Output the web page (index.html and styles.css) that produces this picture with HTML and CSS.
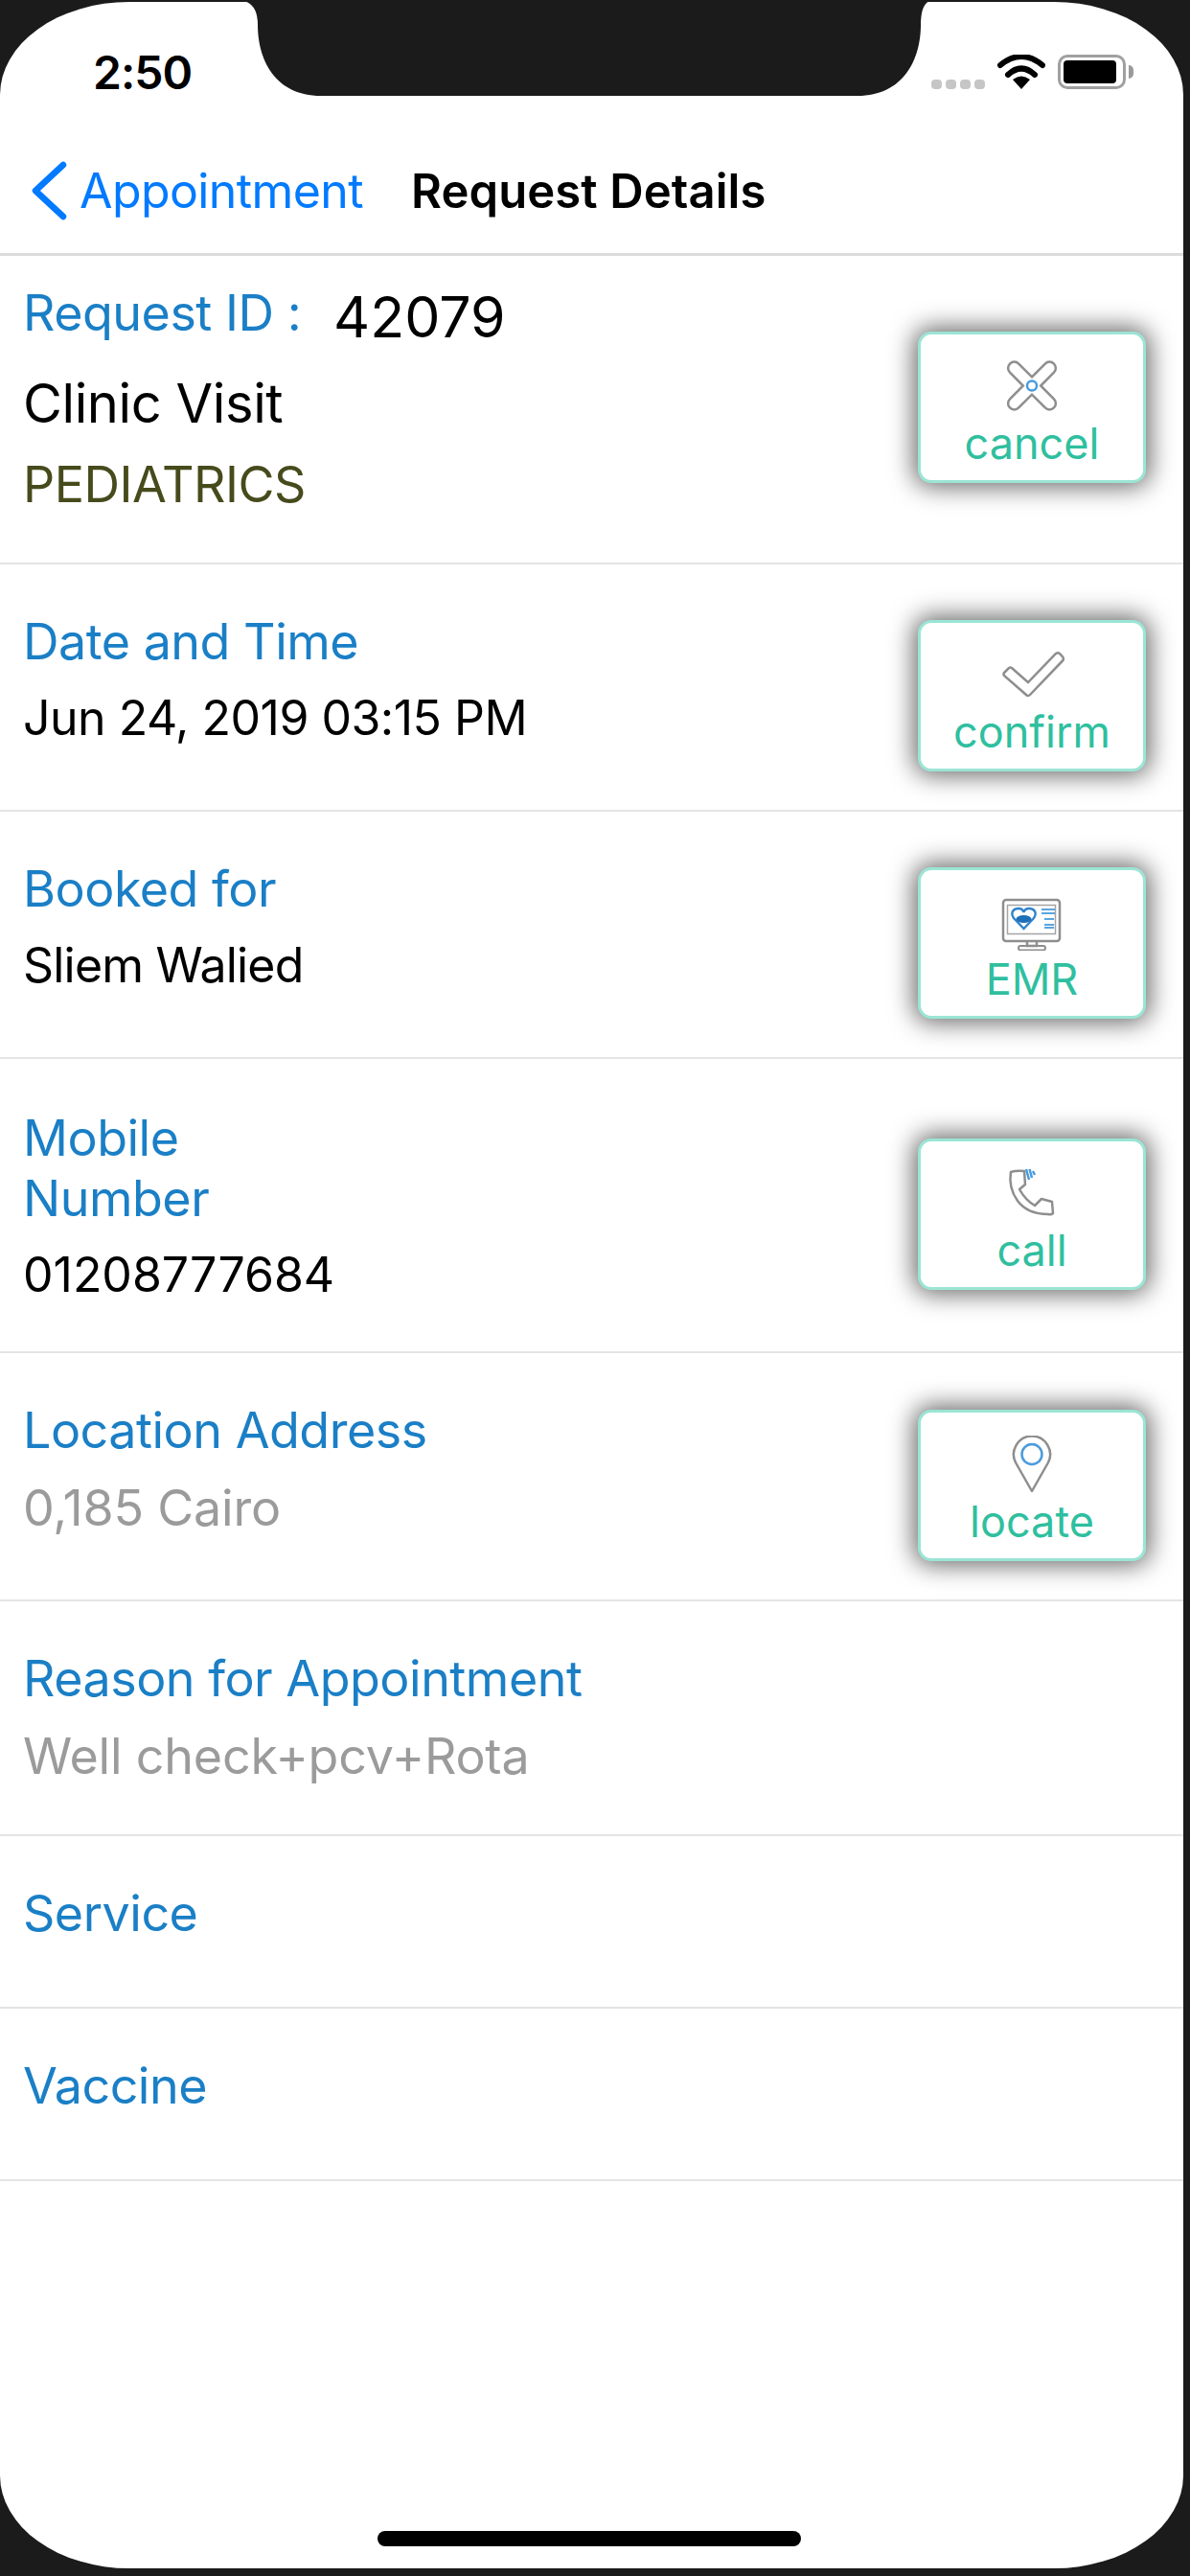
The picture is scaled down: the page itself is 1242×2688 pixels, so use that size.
FILE: index.html
```html
<!DOCTYPE html>
<html lang="en">

<head>
    <meta charset="UTF-8">
    <meta name="viewport" content="width=device-width, initial-scale=1.0">
    <title>Request Details</title>
    <link rel="stylesheet" href="styles.css">
</head>

<body>
    <div class="screen">
        <svg class="notch" width="728" height="100" viewBox="0 0 728 100">
            <path d="M0 0Q22 0 22 26C22 62 40 100 88 100H648C696 100 714 62 714 26Q714 0 728 0Z" fill="#1b1b1b"/>
        </svg>

        <div class="status-bar">
            <span class="time">2:50</span>
            <div class="status-icons">
                <span class="signal"><i></i><i></i><i></i><i></i></span>
                <svg width="50" height="36" viewBox="0 0 50 36">
                    <path d="M25 36L16 26Q25 19 34 26Z" fill="#000"/>
                    <path d="M11 21Q25 8 39 21" fill="none" stroke="#000" stroke-width="6" stroke-linecap="round"/>
                    <path d="M3 11Q25 -7 47 11" fill="none" stroke="#000" stroke-width="6" stroke-linecap="round"/>
                </svg>
                <span class="battery"><i></i></span>
            </div>
        </div>

        <div class="nav-bar">
            <a class="back">
                <svg width="40" height="62" viewBox="0 0 40 62">
                    <path d="M36 4L7 31L36 58" fill="none" stroke="#007aff" stroke-width="6.5" stroke-linecap="round" stroke-linejoin="round"/>
                </svg>
                <span>Appointment</span>
            </a>
            <span class="nav-title">Request Details</span>
        </div>

        <section class="row row-request">
            <div class="info">
                <div class="request-id"><span class="label">Request ID :</span><span class="id-value">42079</span></div>
                <div class="visit-type">Clinic Visit</div>
                <div class="speciality">PEDIATRICS</div>
            </div>
            <a class="action">
                <svg class="action-icon" width="68" height="60" viewBox="0 0 68 60">
                    <path transform="translate(34 29.5) rotate(45)" d="M-6.5 -6.5V-26A6.5 6.5 0 0 1 6.5 -26V-6.5H26A6.5 6.5 0 0 1 26 6.5H6.5V26A6.5 6.5 0 0 1 -6.5 26V6.5H-26A6.5 6.5 0 0 1 -26 -6.5Z" fill="none" stroke="#8e8e8e" stroke-width="2.5"/>
                    <circle cx="34" cy="29.5" r="5" fill="#fff" stroke="#4a9bdc" stroke-width="2.5"/>
                </svg>
                <span>cancel</span>
            </a>
        </section>

        <section class="row row-date">
            <div class="info">
                <div class="label">Date and Time</div>
                <div class="value">Jun 24, 2019 03:15 PM</div>
            </div>
            <a class="action">
                <svg class="action-icon" width="68" height="60" viewBox="0 0 68 60">
                    <path d="M5 28L10 23Q11.5 22 13 23L30 38L59 8Q61 6.5 63 8L66.5 12Q67.5 14 66 15.5L32 51Q30 53 28 51L5 31Q4 29.5 5 28Z" fill="none" stroke="#8e8e8e" stroke-width="2.5"/>
                </svg>
                <span>confirm</span>
            </a>
        </section>

        <section class="row row-booked">
            <div class="info">
                <div class="label">Booked for</div>
                <div class="value">Sliem Walied</div>
            </div>
            <a class="action">
                <svg class="action-icon" width="68" height="60" viewBox="0 0 68 60">
                    <rect x="4" y="7" width="59" height="43" rx="3" fill="none" stroke="#8e8e8e" stroke-width="2.5"/>
                    <rect x="8.5" y="12.5" width="50" height="30" fill="#fff" stroke="#a5a5a5" stroke-width="1.5"/>
                    <path d="M29 51V55H39V51" fill="none" stroke="#8e8e8e" stroke-width="2.5"/>
                    <rect x="20" y="55" width="28" height="4.5" rx="2.2" fill="none" stroke="#8e8e8e" stroke-width="2"/>
                    <path d="M25.5 37L15 26C11 20 15 16 20 16C23 16 25 18 25.5 20C26 18 28 16 31 16C36 16 40 20 36 26Z" fill="#fff" stroke="#2f83cb" stroke-width="2.4"/>
                    <ellipse cx="25.5" cy="27" rx="8" ry="4" fill="#1d6fb8"/>
                    <path d="M44 17H58M44 21H58M47 27H57M47 33H57M47 36H57" stroke="#5aa5e0" stroke-width="2"/>
                </svg>
                <span>EMR</span>
            </a>
        </section>

        <section class="row row-mobile">
            <div class="info">
                <div class="label">Mobile<br>Number</div>
                <div class="value">01208777684</div>
            </div>
            <a class="action">
                <svg class="action-icon" width="68" height="60" viewBox="0 0 68 60">
                    <path d="M12 8Q18 6 26 7L27 21L21 26Q27 37 37 43L44 36L55 39L56 51Q54 53 51 52C36 52 25 46 19 38C14 31 10 20 12 8Z" fill="none" stroke="#8e8e8e" stroke-width="2.5" stroke-linejoin="round"/>
                    <path d="M28 5L31 16M31.500 5L34 14M35 7L37 11" fill="none" stroke="#4a9bdc" stroke-width="2.5"/>
                </svg>
                <span>call</span>
            </a>
        </section>

        <section class="row row-location">
            <div class="info">
                <div class="label">Location Address</div>
                <div class="value muted">0,185 Cairo</div>
            </div>
            <a class="action">
                <svg class="action-icon" width="68" height="60" viewBox="0 0 68 60">
                    <path d="M34 58L17.500 29A19 19 0 1 1 50.500 29Z" fill="none" stroke="#8e8e8e" stroke-width="2.5" stroke-linejoin="round"/>
                    <circle cx="34" cy="19.500" r="10.500" fill="none" stroke="#4a9bdc" stroke-width="2.5"/>
                </svg>
                <span>locate</span>
            </a>
        </section>

        <section class="row row-reason">
            <div class="info">
                <div class="label">Reason for Appointment</div>
                <div class="value muted">Well check+pcv+Rota</div>
            </div>
        </section>

        <section class="row row-single">
            <div class="info">
                <div class="label">Service</div>
            </div>
        </section>

        <section class="row row-single">
            <div class="info">
                <div class="label">Vaccine</div>
            </div>
        </section>

        <div class="home-indicator"></div>
    </div>
</body>

</html>
```

FILE: styles.css
```css
html,
body {
    margin: 0;
    padding: 0;
    background: #1b1b1b;
}

body {
    width: 1242px;
    height: 2688px;
    overflow: hidden;
    font-family: Inter, "Liberation Sans", sans-serif;
}

.screen {
    position: relative;
    width: 1235px;
    height: 2678px;
    margin-top: 2px;
    background: #fff;
    border-radius: 135px / 97px;
    overflow: hidden;
}

.notch {
    position: absolute;
    left: 247px;
    top: -2px;
}

.status-bar {
    display: flex;
    justify-content: space-between;
    align-items: center;
    height: 132px;
    padding: 14px 60px 0 97px;
    box-sizing: border-box;
}

.time {
    font-size: 48px;
    font-weight: 600;
    color: #000;
    letter-spacing: -1px;
}

.status-icons {
    display: flex;
    align-items: center;
    gap: 13px;
}

.signal {
    display: flex;
    gap: 4px;
    margin-top: 26px;
}

.signal i {
    width: 11px;
    height: 10px;
    border-radius: 4px;
    background: #c6c6c6;
}

.battery {
    position: relative;
    display: block;
    width: 71px;
    height: 36px;
    padding: 3px 7px 3px 3px;
    box-sizing: border-box;
    border: 3px solid #a0a0a0;
    border-radius: 10px;
}

.battery::after {
    content: "";
    position: absolute;
    right: -11px;
    top: 8px;
    width: 5px;
    height: 14px;
    border-radius: 0 5px 5px 0;
    background: #9a9a9a;
}

.battery i {
    display: block;
    height: 100%;
    background: #000;
    border-radius: 4px;
}

.nav-bar {
    display: flex;
    align-items: center;
    height: 133px;
    padding-left: 30px;
    box-sizing: border-box;
    border-bottom: 3px solid #dcdcdc;
}

.back {
    display: flex;
    align-items: center;
    gap: 13px;
    color: #007aff;
    font-size: 50px;
    letter-spacing: -0.6px;
}

.nav-title {
    margin-left: 50px;
    font-size: 49px;
    font-weight: 600;
    color: #000;
    letter-spacing: 0.1px;
}

.row {
    display: flex;
    justify-content: space-between;
    align-items: flex-end;
    padding: 0 39px 40px 24px;
    box-sizing: border-box;
    border-bottom: 2px solid #e4e4e4;
}

.row-request {
    height: 322px;
    padding-bottom: 83px;
}

.row-date,
.row-booked {
    height: 258px;
}

.row-mobile {
    height: 307px;
    padding-bottom: 64px;
}

.row-location {
    height: 259px;
}

.row-reason {
    height: 245px;
}

.row-single {
    height: 180px;
}

.info {
    align-self: flex-start;
    padding-top: 49px;
}

.row-request .info {
    padding-top: 28px;
}

.row-mobile .info {
    padding-top: 51px;
}

.label {
    font-size: 52px;
    line-height: 63px;
    color: #1a7fc6;
    letter-spacing: -0.5px;
}

.value {
    margin-top: 18px;
    font-size: 50px;
    line-height: 60px;
    color: #000;
    letter-spacing: -0.5px;
}

.row-booked .value {
    letter-spacing: -0.8px;
}

.row-mobile .value {
    letter-spacing: 0;
}

.value.muted {
    margin-top: 20px;
    font-size: 52px;
    color: #9b9b9b;
    letter-spacing: -0.2px;
}

.request-id {
    display: flex;
    gap: 34px;
}

.id-value {
    margin-top: 4px;
    font-size: 59px;
    line-height: 63px;
    color: #000;
}

.visit-type {
    margin-top: 25px;
    font-size: 56px;
    line-height: 68px;
    color: #000;
    letter-spacing: -0.4px;
}

.speciality {
    margin-top: 20px;
    font-size: 52px;
    line-height: 62px;
    color: #474b1c;
    letter-spacing: -0.5px;
}

.action {
    display: flex;
    flex-direction: column;
    align-items: center;
    width: 238px;
    height: 158px;
    padding-top: 24px;
    box-sizing: border-box;
    background: #fff;
    border: 3px solid #9be5d5;
    border-radius: 14px;
    box-shadow: 0 0 26px 4px rgba(0, 0, 0, 0.6);
    color: #2fbf9f;
    font-size: 45px;
    line-height: 56px;
}

.action-icon {
    flex: none;
    margin-bottom: 2px;
}

.home-indicator {
    position: absolute;
    left: 394px;
    bottom: 23px;
    width: 442px;
    height: 16px;
    border-radius: 8px;
    background: #000;
}
```
